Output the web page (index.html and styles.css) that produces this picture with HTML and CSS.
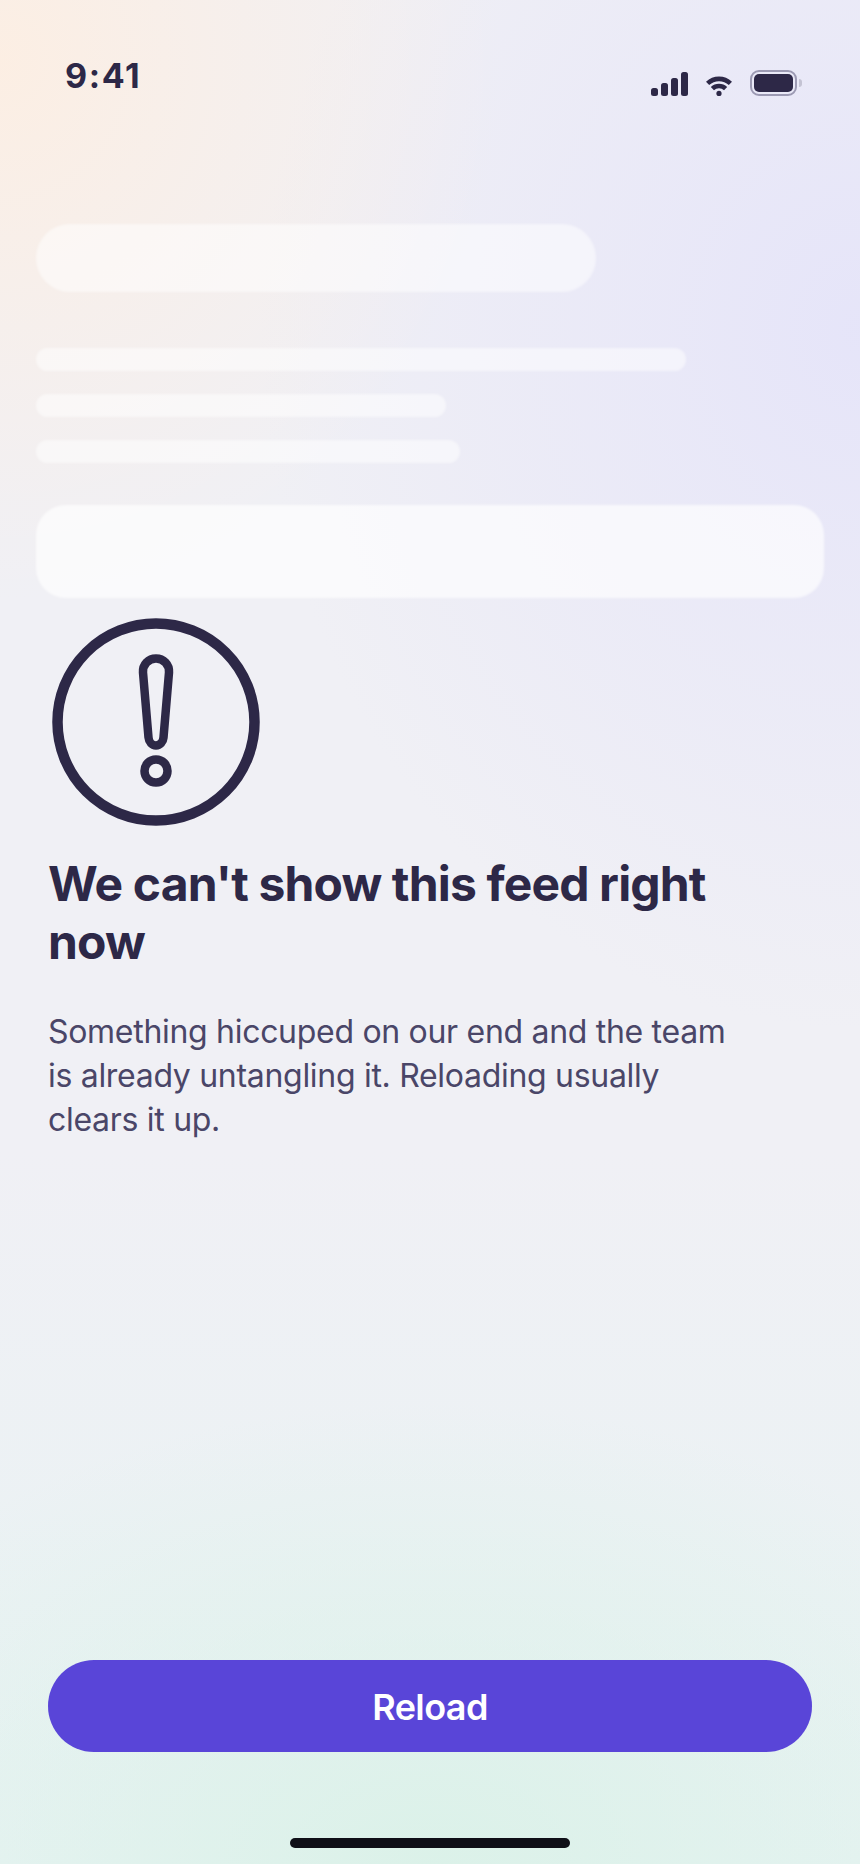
FILE: index.html
```html
<!DOCTYPE html>
<html lang="en">
<head>
  <meta charset="UTF-8" />
  <meta name="viewport" content="width=device-width, initial-scale=1.0"/>
  <title>Feed unavailable</title>
  <link rel="stylesheet" href="styles.css">
</head>
<body>
  <div class="screen">
    <div class="status-bar">
      <span class="time">9:41</span>
      <div class="status-icons">
        <svg class="signal" width="37" height="24" viewBox="0 0 37 24" aria-hidden="true">
          <rect x="0" y="16" width="7" height="8" rx="2.5"/>
          <rect x="10" y="11" width="7" height="13" rx="2.5"/>
          <rect x="20" y="6" width="7" height="18" rx="2.5"/>
          <rect x="30" y="0" width="7" height="24" rx="2.5"/>
        </svg>
        <svg class="wifi" width="26" height="20" viewBox="0 0 26 20" aria-hidden="true">
          <path d="M1.600 7.400a16.500 16.500 0 0 1 22.800 0" />
          <path d="M6.400 12.600a9.600 9.600 0 0 1 13.200 0" />
          <circle cx="13" cy="17.400" r="2.600"/>
        </svg>
        <div class="battery">
          <div class="battery-fill"></div>
          <div class="battery-nib"></div>
        </div>
      </div>
    </div>

    <div class="skeleton">
      <div class="sk sk-title"></div>
      <div class="sk-lines">
        <div class="sk sk-line w1"></div>
        <div class="sk sk-line w2"></div>
        <div class="sk sk-line w3"></div>
      </div>
      <div class="sk sk-card"></div>
    </div>

    <div class="message">
      <svg class="alert-icon" width="216" height="216" viewBox="0 0 216 216" aria-hidden="true">
        <circle cx="108" cy="108" r="98.500"/>
        <path d="M108 44.500c-7.500 0-13.500 6-13 14l5.500 65c.4 4.500 3.500 8 7.500 8s7.100-3.500 7.500-8l5.500-65c.5-8-5.500-14-13-14z"/>
        <circle cx="108" cy="157" r="11.500"/>
      </svg>
      <h1>We can't show this feed right now</h1>
      <p>Something hiccuped on our end and the team is already untangling it. Reloading usually clears it up.</p>
    </div>

    <div class="actions">
      <button type="button" class="reload">Reload</button>
    </div>
    <div class="home-bar"></div>
  </div>
</body>
</html>
```
FILE: styles.css
```css
* {
  box-sizing: border-box;
}

body {
  margin: 0;
  font-family: Inter, "Noto Sans", sans-serif;
  color: #2d2847;
}

.screen {
  width: 860px;
  height: 1864px;
  display: flex;
  flex-direction: column;
  overflow: hidden;
  background-color: #f0f0f5;
  background-image:
    radial-gradient(500px 540px at 0 60px, rgba(254, 238, 224, 0.85), rgba(254, 238, 224, 0)),
    radial-gradient(600px 700px at 860px 330px, rgba(229, 228, 249, 0.95), rgba(229, 228, 249, 0)),
    radial-gradient(700px 460px at 430px 1864px, rgba(217, 241, 231, 0.85), rgba(217, 241, 231, 0)),
    linear-gradient(to bottom, rgba(232, 243, 243, 0) 1150px, rgba(232, 243, 243, 1) 1864px);
}

.status-bar {
  height: 224px;
  padding: 57px 63px 0 65px;
  display: flex;
  justify-content: space-between;
  align-items: flex-start;
}

.time {
  font-size: 34px;
  font-weight: 700;
  line-height: 38px;
  letter-spacing: 1.6px;
}

.status-icons {
  display: flex;
  align-items: flex-end;
  gap: 18px;
  margin-top: 13px;
  height: 26px;
}

.signal {
  fill: #2d2847;
}

.wifi {
  fill: #2d2847;
  stroke: none;
}

.wifi path {
  fill: none;
  stroke: #2d2847;
  stroke-width: 4.600;
}

.battery {
  position: relative;
  width: 47px;
  height: 26px;
  padding: 2px;
  border: 2px solid #9c9ab3;
  border-radius: 9px;
}

.battery-fill {
  height: 100%;
  background: #2d2847;
  border-radius: 5px;
}

.battery-nib {
  position: absolute;
  right: -7px;
  top: 7px;
  width: 3px;
  height: 8px;
  background: #c4c3d3;
  border-radius: 0 3px 3px 0;
}

.skeleton {
  padding: 0 36px;
  display: flex;
  flex-direction: column;
}

.sk {
  background: rgba(255, 255, 255, 0.5);
  filter: blur(0.8px);
}

.sk-title {
  width: 560px;
  height: 68px;
  border-radius: 34px;
}

.sk-lines {
  margin-top: 56px;
  display: flex;
  flex-direction: column;
  gap: 23px;
}

.sk-line {
  height: 23px;
  border-radius: 12px;
}

.w1 {
  width: 650px;
}

.w2 {
  width: 410px;
}

.w3 {
  width: 424px;
}

.sk-card {
  margin-top: 42px;
  width: 788px;
  height: 93px;
  border-radius: 30px;
  background: rgba(255, 255, 255, 0.66);
}

.message {
  padding: 16px 48px 0;
}

.alert-icon {
  display: block;
  fill: none;
  stroke: #2d2847;
}

.alert-icon circle:first-child {
  stroke-width: 10.500;
}

.alert-icon path,
.alert-icon circle:last-child {
  stroke-width: 8.500;
}

h1 {
  margin: 25px 0 0;
  font-size: 48px;
  line-height: 58px;
  font-weight: 700;
  letter-spacing: -0.85px;
}

p {
  margin: 39px 0 0;
  max-width: 700px;
  font-size: 32px;
  line-height: 44px;
  letter-spacing: -0.3px;
  color: #4a4668;
}

.actions {
  margin-top: auto;
  padding: 0 48px;
}

.reload {
  display: block;
  width: 100%;
  height: 92px;
  padding-top: 3px;
  border: 0;
  border-radius: 46px;
  background: #5945d8;
  color: #fff;
  font-family: inherit;
  font-size: 36px;
  font-weight: 600;
  letter-spacing: -0.6px;
}

.home-bar {
  width: 280px;
  height: 10px;
  margin: 86px auto 16px;
  background: #0f0f17;
  border-radius: 5px;
}
```
